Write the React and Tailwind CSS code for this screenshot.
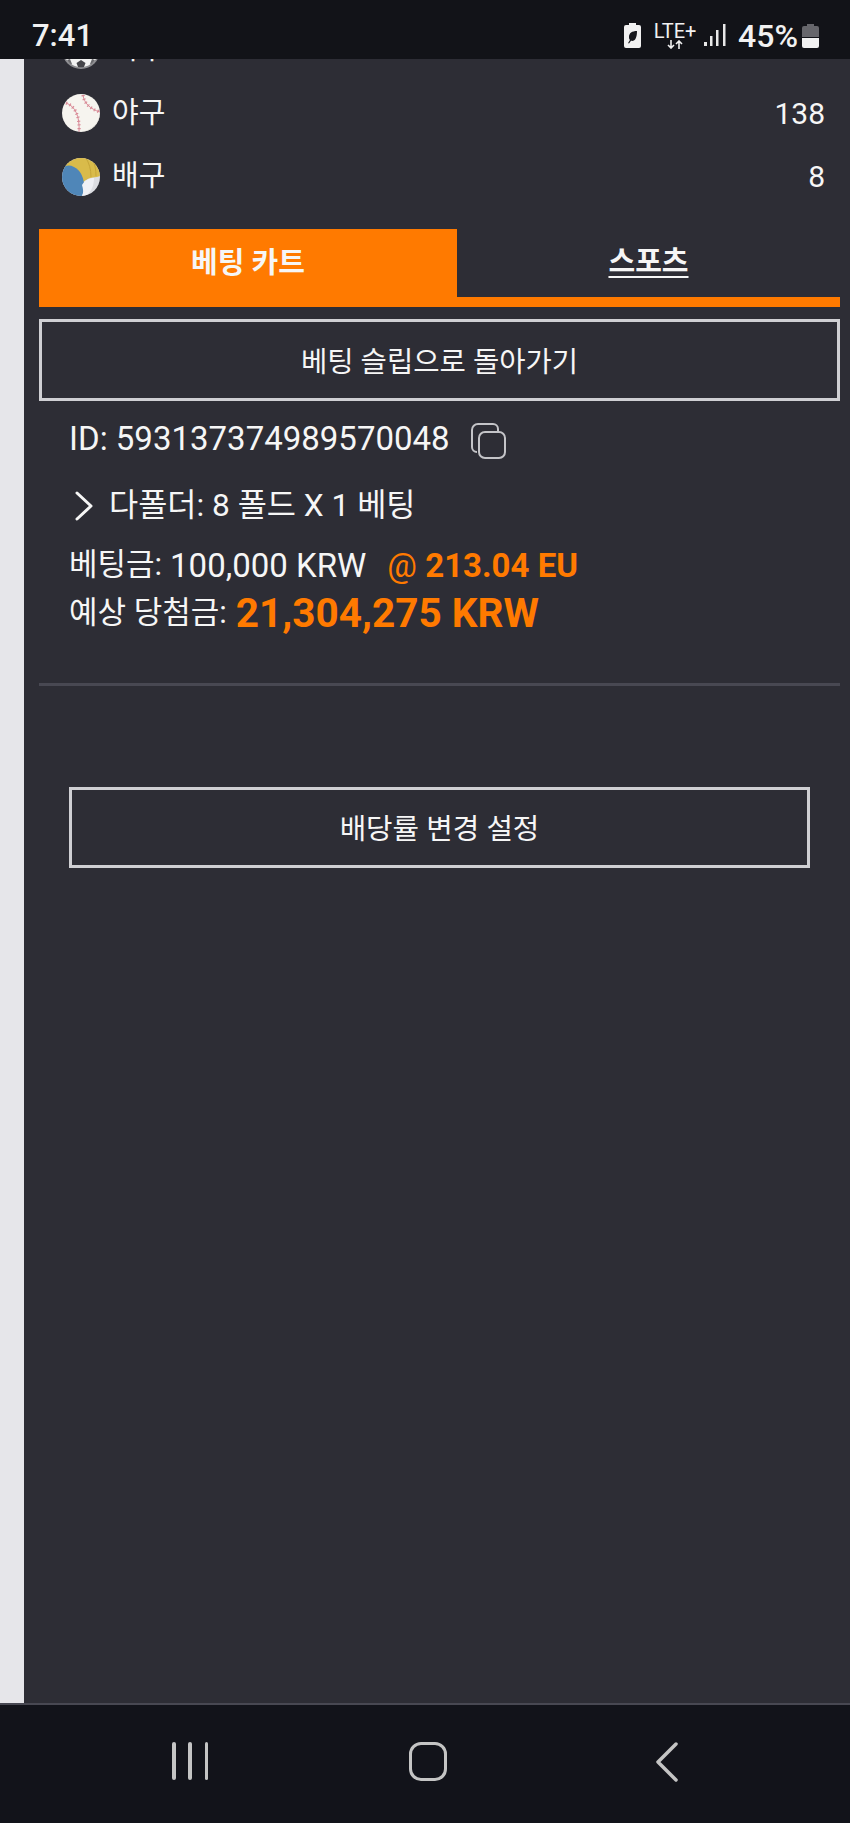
import React from "react";

const SoccerBall = () => (
  <svg width="38" height="38" viewBox="0 0 38 38">
    <circle cx="19" cy="19" r="19" fill="#8c8c90" />
    <circle cx="19" cy="18" r="18" fill="#f2f2f2" />
    <path d="M19 29l4.500 3-1.500 4a18 18 0 0 1-6 0l-1.500-4z" fill="#45454a" />
    <path d="M5 29l3-1 2 5-1 .5a18 18 0 0 1-4-4.500zM33 29l-3-1-2 5 1 .5a18 18 0 0 0 4-4.500z" fill="#6a6a6e" />
  </svg>
);

const Baseball = () => (
  <svg width="38" height="38" viewBox="0 0 38 38">
    <defs>
      <clipPath id="bb">
        <circle cx="19" cy="19" r="19" />
      </clipPath>
    </defs>
    <g clipPath="url(#bb)">
      <rect width="38" height="38" fill="#f6f4ef" />
      <path d="M38 19a19 19 0 0 1-19 19c12-2 18-10 19-19z" fill="#dcdad3" />
      <g fill="none" stroke="#d98a97">
        <path strokeWidth="1" d="M4 9c9 3 14 13 13 29" />
        <path strokeWidth="1" d="M21 1c1 8 7 14 17 17" />
        <path strokeDasharray="1.200 2.600" strokeWidth="3.200" d="M4 9c9 3 14 13 13 29" />
        <path strokeDasharray="1.200 2.600" strokeWidth="3.200" d="M21 1c1 8 7 14 17 17" />
      </g>
    </g>
  </svg>
);

const Volleyball = () => (
  <svg width="38" height="38" viewBox="0 0 38 38">
    <defs>
      <clipPath id="vb">
        <circle cx="19" cy="19" r="19" />
      </clipPath>
    </defs>
    <g clipPath="url(#vb)">
      <rect width="38" height="38" fill="#dcdde2" />
      <path d="M0 0h38v18l-3 1c-6 0-11 2-15 6-1-6-6-11-19-15z" fill="#d9bb4a" />
      <path d="M24 0c3 5 5 11 5 19M31 2c2 5 3 10 3 16" fill="none" stroke="#c5a53a" strokeWidth="1" />
      <path d="M0 10c4-3 8-3 12-1 6 3 9 9 10 16 0 5 0 9-2 13H0z" fill="#4f86b8" />
      <path d="M20 27c3-5 7-7 12-7 0 7-2 13-8 18h-4c2-4 1-7 0-11z" fill="#eff0f5" />
    </g>
  </svg>
);

const LeafBattery = () => (
  <svg width="17" height="25" viewBox="0 0 17 25">
    <path d="M5 0h7v2h3a2 2 0 0 1 2 2v19a2 2 0 0 1-2 2H2a2 2 0 0 1-2-2V4a2 2 0 0 1 2-2h3z" fill="#f1f1f1" />
    <path d="M13 8c-5 0-8 2-8 6 0 1 0 2 1 3-1 1-1 2-2 3l1 .6 2-2.800c4 1 6-3 6-9.800z" fill="#17181d" />
  </svg>
);

const NetworkArrows = () => (
  <svg width="16" height="9" viewBox="0 0 16 9" fill="none" stroke="#f1f1f1" strokeWidth="1.600">
    <path d="M4 0v8M1 5l3 3 3-3" />
    <path d="M12 9V1M9 4l3-3 3 3" />
  </svg>
);

const Signal = () => (
  <svg width="22" height="23" viewBox="0 0 22 23" fill="#e8e8e8">
    <rect x="0" y="18" width="3" height="4" />
    <rect x="6" y="12" width="2.500" height="10" />
    <rect x="12" y="6" width="2.500" height="16" />
    <rect x="19" y="0" width="2.500" height="22" />
  </svg>
);

const PhoneBattery = () => (
  <svg width="17" height="24" viewBox="0 0 17 24">
    <path d="M5 0h7v2h3a2 2 0 0 1 2 2v9H0V4a2 2 0 0 1 2-2h3z" fill="#66666b" />
    <path d="M0 14h17v8a2 2 0 0 1-2 2H2a2 2 0 0 1-2-2z" fill="#f1f1f1" />
  </svg>
);

const CopyIcon = () => (
  <svg width="35" height="36" viewBox="0 0 35 36" fill="none" stroke="#c4c4c8" strokeWidth="2">
    <path d="M6 29a5 5 0 0 1-5-5V7a6 6 0 0 1 6-6h15a5 5 0 0 1 5 5v3" />
    <rect x="8" y="9" width="26" height="26" rx="6" />
  </svg>
);

const sports = [
  { name: "축구", count: "", icon: <SoccerBall /> },
  { name: "야구", count: "138", icon: <Baseball /> },
  { name: "배구", count: "8", icon: <Volleyball /> },
];

export default function App() {
  return (
    <div className="flex h-[1823px] w-[850px] flex-col overflow-hidden bg-[#2d2d35] font-['Roboto','Noto_Sans_CJK_KR',sans-serif] text-[#f6f6f6]">
      {/* Status bar */}
      <div className="z-10 flex h-[59px] shrink-0 items-center justify-between bg-[#121318] pl-[32px] pr-[31px] pt-[12px] text-[#f1f1f1]">
        <span className="text-[31px] font-medium leading-none">7:41</span>
        <div className="flex items-center">
          <LeafBattery />
          <div className="ml-[13px] flex w-[42px] flex-col items-center">
            <span className="text-[20px] leading-[17px]">LTE+</span>
            <NetworkArrows />
          </div>
          <div className="ml-[8px]">
            <Signal />
          </div>
          <span className="ml-[12px] text-[32px] font-medium leading-none">45%</span>
          <div className="ml-[4px]">
            <PhoneBattery />
          </div>
        </div>
      </div>

      <div className="flex min-h-0 flex-1">
        <div className="w-[24px] shrink-0 bg-[#e6e6ea]" />
        <main className="min-w-0 flex-1 pl-[15px] pr-[10px]">
          {/* Sports list */}
          <ul className="mt-[-41px] pl-[23px] pr-[15px]">
            {sports.map((s) => (
              <li key={s.name} className="flex h-[63.5px] items-center justify-between text-[30px]">
                <div className="flex items-center">
                  {s.icon}
                  <span className="ml-[12px] text-[29px]">{s.name}</span>
                </div>
                <span>{s.count}</span>
              </li>
            ))}
          </ul>

          {/* Tabs */}
          <div className="mt-[20px] flex h-[78px]">
            <div className="flex w-[418px] items-center justify-center bg-[#ff7a00] pb-[8px] text-[29px] font-bold">
              베팅 카트
            </div>
            <div className="flex flex-1 items-center justify-center border-b-[10px] border-[#ff7a00] text-[29px] font-bold underline underline-offset-4">
              스포츠
            </div>
          </div>

          <button className="mt-[12px] flex h-[82px] w-full items-center justify-center border-[3px] border-[#cfcfd3] pt-[5px] text-[28.600px]">
            베팅 슬립으로 돌아가기
          </button>

          {/* Bet details */}
          <div className="pl-[30px]">
            <div className="flex h-[76px] items-center text-[33px]">
              <span>ID: 593137374989570048</span>
              <div className="ml-[21px] mt-[4px]">
                <CopyIcon />
              </div>
            </div>
            <div className="flex h-[56px] items-center pt-[2px] text-[31.700px]">
              <svg className="ml-[6px]" width="18" height="30" viewBox="0 0 18 30" fill="none" stroke="#f6f6f6" strokeWidth="3" strokeLinecap="round" strokeLinejoin="round">
                <path d="M2 2l14 13L2 28" />
              </svg>
              <span className="ml-[16px]">다폴더: 8 폴드 X 1 베팅</span>
            </div>
            <div className="mt-[9px] flex h-[48px] items-center">
              <span className="text-[31px]">베팅금:</span>
              <span className="ml-[8px] text-[33px]">100,000 KRW</span>
              <span className="ml-[21px] text-[33px] font-bold text-[#ff7a00]">
                <span className="font-normal">@</span> 213.04 EU
              </span>
            </div>
            <div className="flex h-[48px] items-center">
              <span className="text-[31px]">예상 당첨금:</span>
              <span className="ml-[9px] text-[40.500px] font-bold text-[#ff7a00]">21,304,275 KRW</span>
            </div>
          </div>

          <div className="mt-[45px] h-[3px] bg-[#484852]" />

          <button className="ml-[30px] mt-[101px] flex h-[81px] w-[741px] items-center justify-center border-[3px] border-[#cfcfd3] pt-[5px] text-[28.800px]">
            배당률 변경 설정
          </button>
        </main>
      </div>

      {/* Navigation bar */}
      <div className="flex h-[120px] shrink-0 items-start justify-center border-t-[2px] border-[#484852] bg-[#12131a] pt-[37px]">
        <div className="ml-[172px] flex h-[38px] w-[36px] justify-between">
          <span className="w-[3.500px] rounded-full bg-[#c4c4c4]" />
          <span className="w-[3.500px] rounded-full bg-[#c4c4c4]" />
          <span className="w-[3.500px] rounded-full bg-[#c4c4c4]" />
        </div>
        <div className="ml-[201px] h-[39px] w-[38px] rounded-[12px] border-[3.500px] border-[#c4c4c4]" />
        <svg className="ml-[209px] mr-auto" width="22" height="40" viewBox="0 0 22 40" fill="none" stroke="#c4c4c4" strokeWidth="3.500" strokeLinecap="round" strokeLinejoin="round">
          <path d="M20 2L2 20l18 18" />
        </svg>
      </div>
    </div>
  );
}
